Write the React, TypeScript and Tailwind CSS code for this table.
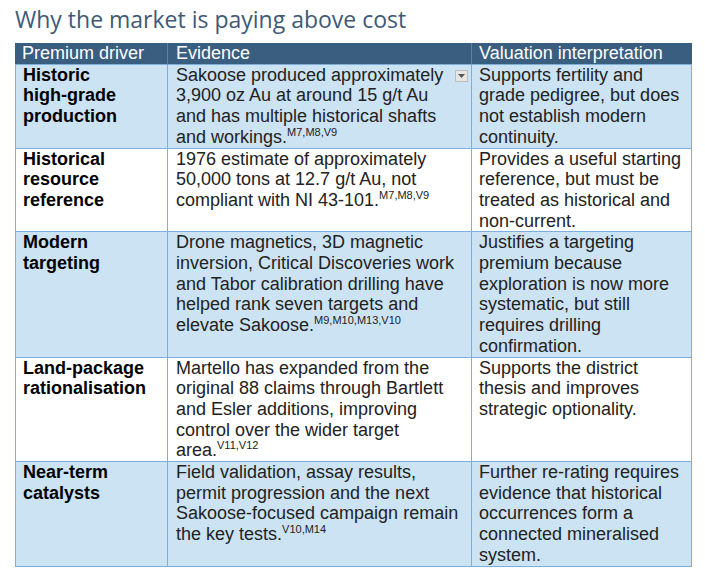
import React from "react";

type Row = {
  driver: React.ReactNode;
  evidence: string;
  evSup: string;
  valuation: string;
  blue: boolean;
  dropdown?: boolean;
};

const rows: Row[] = [
  {
    driver: (
      <>
        Historic <span className="whitespace-nowrap">high-grade</span>{" "}
        production
      </>
    ),
    evidence:
      "Sakoose produced approximately 3,900 oz Au at around 15 g/t Au and has multiple historical shafts and workings.",
    evSup: "M7,M8,V9",
    valuation:
      "Supports fertility and grade pedigree, but does not establish modern continuity.",
    blue: true,
    dropdown: true,
  },
  {
    driver: "Historical resource reference",
    evidence:
      "1976 estimate of approximately 50,000 tons at 12.7 g/t Au, not compliant with NI 43-101.",
    evSup: "M7,M8,V9",
    valuation:
      "Provides a useful starting reference, but must be treated as historical and non-current.",
    blue: false,
  },
  {
    driver: "Modern targeting",
    evidence:
      "Drone magnetics, 3D magnetic inversion, Critical Discoveries work and Tabor calibration drilling have helped rank seven targets and elevate Sakoose.",
    evSup: "M9,M10,M13,V10",
    valuation:
      "Justifies a targeting premium because exploration is now more systematic, but still requires drilling confirmation.",
    blue: true,
  },
  {
    driver: (
      <>
        <span className="whitespace-nowrap">Land-package</span> rationalisation
      </>
    ),
    evidence:
      "Martello has expanded from the original 88 claims through Bartlett and Esler additions, improving control over the wider target area.",
    evSup: "V11,V12",
    valuation:
      "Supports the district thesis and improves strategic optionality.",
    blue: false,
  },
  {
    driver: (
      <>
        <span className="whitespace-nowrap">Near-term</span> catalysts
      </>
    ),
    evidence:
      "Field validation, assay results, permit progression and the next Sakoose-focused campaign remain the key tests.",
    evSup: "V10,M14",
    valuation:
      "Further re-rating requires evidence that historical occurrences form a connected mineralised system.",
    blue: true,
  },
];

function Sup({ children }: { children: React.ReactNode }) {
  return (
    <span className="align-super text-[11px] leading-[0]">{children}</span>
  );
}

export default function App() {
  return (
    <div className="min-h-[577px] w-[705px] bg-white">
      <div
        className="pl-[15px] pt-[4px] pb-[9px] text-[23px] leading-[30px] text-[#3d5a78]"
        style={{ fontFamily: '"Open Sans", sans-serif' }}
      >
        Why the market is paying above cost
      </div>
      <div
        className="ml-[15px] w-[677px] text-[18px] leading-[20.7px]"
        style={{ fontFamily: '"Liberation Sans", Arial, sans-serif' }}
      >
        <div className="grid grid-cols-[153px_304px_220px] bg-[#395e80] text-white">
          <div className="border-b border-r border-b-[#7eaedb] border-r-[#5f83a4] pl-[7px] pr-[6px]">
            Premium driver
          </div>
          <div className="border-b border-r border-b-[#7eaedb] border-r-[#5f83a4] pl-[8px] pr-[9px]">
            Evidence
          </div>
          <div className="border-b border-b-[#7eaedb] pl-[7px] pr-[6px]">
            Valuation interpretation
          </div>
        </div>
        {rows.map((r, i) => (
          <div
            key={i}
            className={
              "grid grid-cols-[153px_304px_220px] " +
              (r.blue ? "bg-[#cce3f4]" : "bg-white")
            }
          >
            <div className="border-b border-l border-r border-[#7eaedb] pl-[7px] pr-[6px] font-bold text-black">
              {r.driver}
            </div>
            <div className="relative border-b border-r border-[#7eaedb] pl-[8px] pr-[9px] text-[#222222]">
              {r.evidence}
              <Sup>{r.evSup}</Sup>
              {r.dropdown && (
                <span className="absolute right-[3px] top-[5px] flex h-[12px] w-[13px] items-center justify-center border border-[#bdbdbd] bg-[#e6e6e6]">
                  <svg width="7" height="4" viewBox="0 0 7 4">
                    <path d="M0 0 L7 0 L3.5 4 Z" fill="#555555" />
                  </svg>
                </span>
              )}
            </div>
            <div className="border-b border-r border-[#7eaedb] pl-[7px] pr-[6px] text-[#222222]">
              {r.valuation}
            </div>
          </div>
        ))}
      </div>
    </div>
  );
}
